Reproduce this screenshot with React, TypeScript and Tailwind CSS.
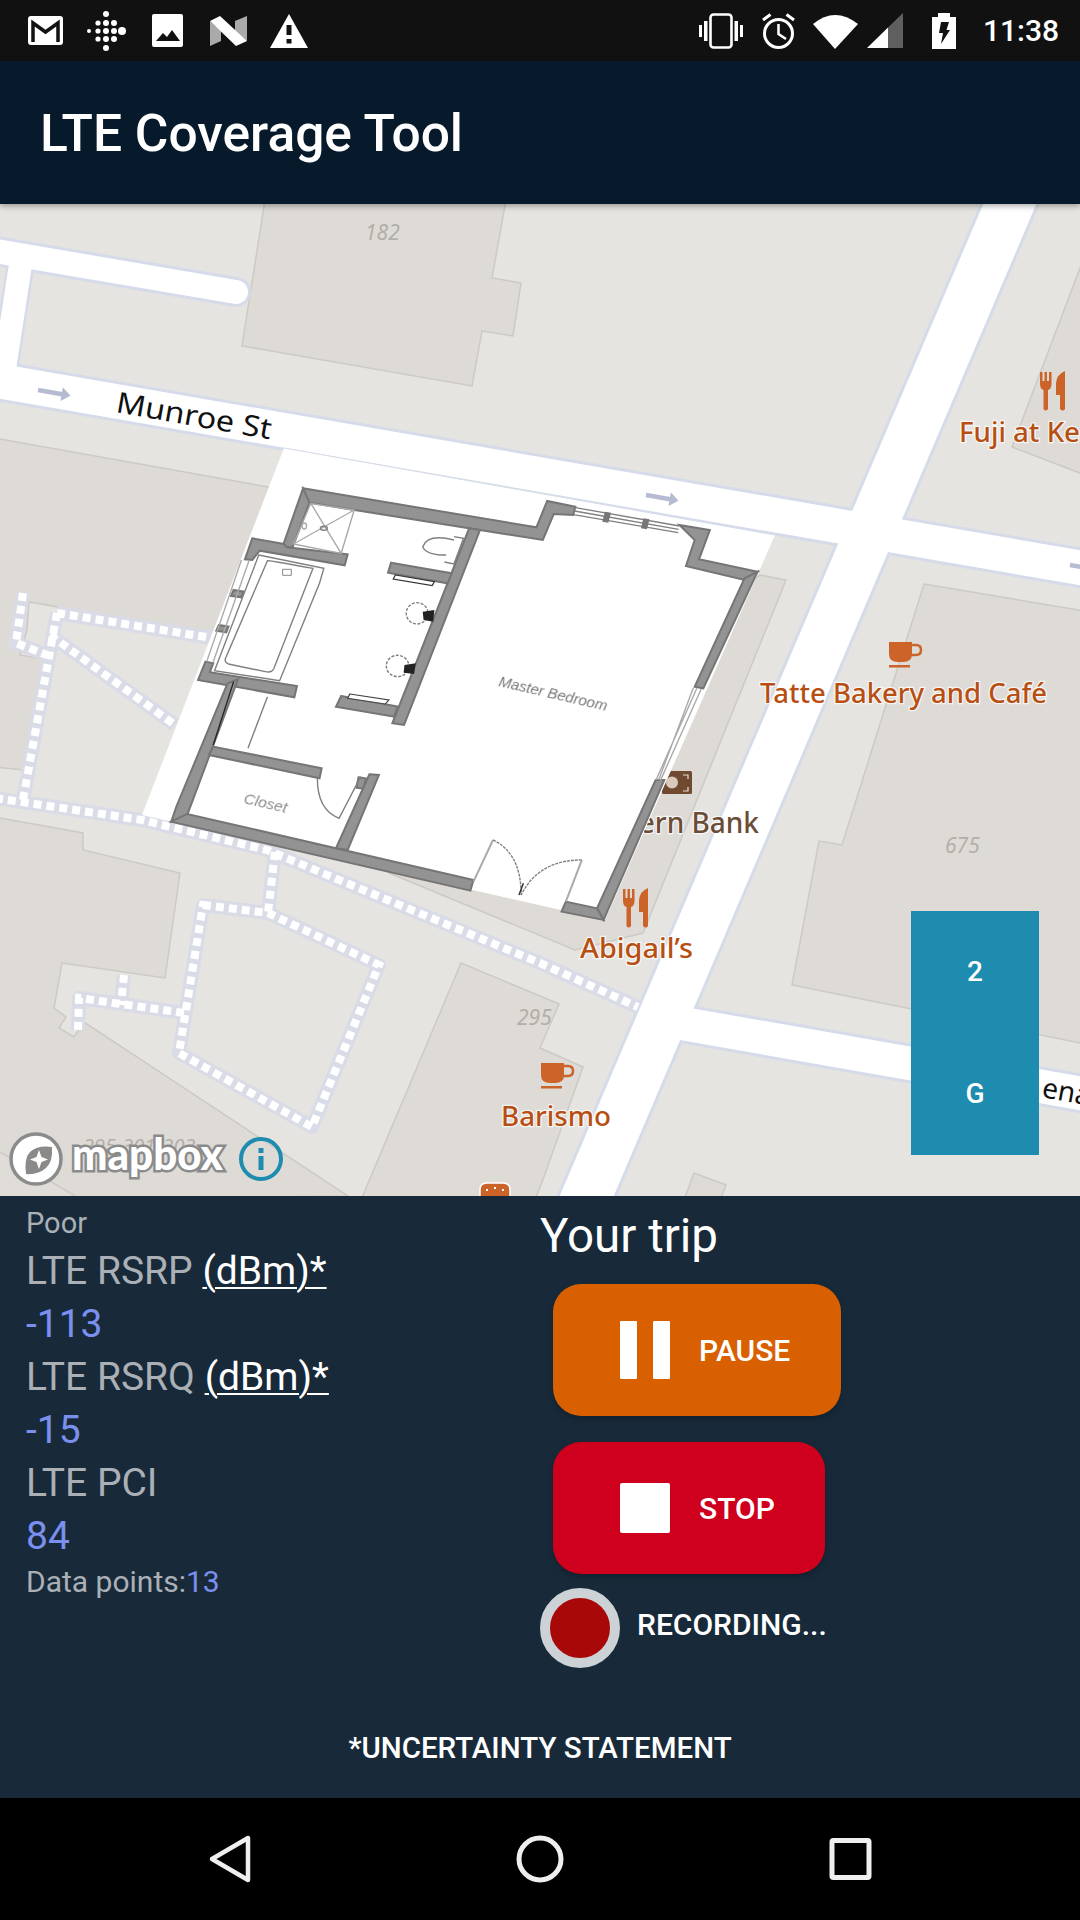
const FP = "translate(120 440) scale(0.4337 0.3333)";
const walls = [
  "422,145 960,262 985,183 1050,200 1045,225 1000,222 975,300 435,188",
  "422,145 437,188 398,322 375,320",
  "305,295 378,312 385,322 525,343 518,376 322,332 305,360 288,358",
  "197,665 215,670 207,697 408,738 402,772 180,720",
  "248,730 272,718 155,1125 118,1145 130,1100",
  "215,920 465,985 460,1015 205,945",
  "118,1145 155,1122 815,1320 808,1352",
  "575,1003 597,1005 525,1230 498,1225",
  "550,1012 568,1016 560,1046 545,1043",
  "805,265 830,270 655,855 628,850",
  "625,368 765,400 755,430 618,398",
  "510,768 640,800 632,830 498,800",
  "1290,255 1360,270 1335,358 1470,395 1440,420 1305,378 1325,300",
  "1440,415 1470,395 1345,745 1325,740",
  "1235,1020 1255,1020 1115,1440 1100,1405",
  "1028,1385 1100,1405 1115,1440 1018,1415",
  "262,450 285,455 280,472 256,468",
  "228,555 250,560 245,577 222,572",
];

function FloorPlan() {
  const thin = { fill: "none", stroke: "#808080", strokeWidth: 1.4, vectorEffect: "non-scaling-stroke" as const };
  const light = { fill: "none", stroke: "#aaaaaa", strokeWidth: 1.4, vectorEffect: "non-scaling-stroke" as const };
  return (
    <g>
      <polygon points="284,448 775,535 605,920 142,815" fill="#ffffff" />
      <line x1="284" y1="448" x2="775" y2="535" stroke="#d5dbe9" strokeWidth="1" />
      <g transform={FP} filter="url(#soft)">
        {walls.map((p) => (
          <polygon key={p} points={p} fill="#939393" stroke="#757575" strokeWidth="2" vectorEffect="non-scaling-stroke" />
        ))}
        <path d="M1050 203 L1290 258 M1046 224 L1287 278 M1048 213 L1288 268" {...thin} />
        <polygon points="1118,215 1132,218 1126,248 1112,245" fill="#777" />
        <polygon points="1207,235 1221,238 1215,268 1201,265" fill="#777" />
        <path d="M1330 745 L1236 1020 M1340 747 L1246 1022 M1322 743 L1242 1020" {...light} />
        <path d="M298 360 L215 665 M280 360 L200 665" {...light} />
        <path d="M455 1015 Q455 1110 505 1135 L555 1010" {...thin} />
        <path d="M815 1325 L860 1200" {...light} strokeWidth="2" />
        <path d="M860 1200 Q925 1240 925 1365" {...thin} strokeDasharray="3 1" />
        <path d="M1065 1260 Q965 1260 925 1365" {...thin} strokeDasharray="3 1" />
        <path d="M1065 1260 L1028 1385" {...light} strokeWidth="2" />
        <path d="M920 1365 L930 1330" stroke="#333" strokeWidth="1.5" vectorEffect="non-scaling-stroke" fill="none" />
        <path d="M262 725 L215 915" stroke="#222" strokeWidth="1.3" vectorEffect="non-scaling-stroke" fill="none" />
        <path d="M340 770 L295 925" {...thin} />
        <path d="M320 345 L470 385 L460 430 L368 722 L218 692 Z" {...thin} />
        <path d="M340 362 Q338 360 445 385 L355 685 Q350 700 335 695 L250 672 Q238 665 245 650 Z" {...thin} />
        <rect x="375" y="388" width="20" height="18" fill="none" stroke="#888" strokeWidth="1" vectorEffect="non-scaling-stroke" />
        <path d="M440 190 L540 210 L510 340 L400 312 Z M440 190 L510 340 M540 210 L400 312" {...light} />
        <ellipse cx="470" cy="265" rx="8" ry="6" {...thin} />
        <ellipse cx="425" cy="258" rx="5" ry="9" {...light} />
        <path d="M770 290 L792 295 L770 372 L748 366" {...thin} />
        <path d="M770 300 Q710 280 698 320 Q705 345 752 345" {...thin} />
        <ellipse cx="685" cy="520" rx="25" ry="32" {...thin} strokeDasharray="3 1.5" />
        <polygon points="698,515 725,510 722,545 700,540" fill="#222" />
        <ellipse cx="640" cy="678" rx="26" ry="32" {...thin} strokeDasharray="3 1.5" />
        <polygon points="656,675 682,670 678,702 654,698" fill="#222" />
        <polygon points="635,405 725,425 720,437 630,417" fill="#fff" stroke="#333" strokeWidth="1.2" vectorEffect="non-scaling-stroke" />
        <polygon points="530,762 620,780 612,792 525,775" fill="#fff" stroke="#444" strokeWidth="1.2" vectorEffect="non-scaling-stroke" />
      </g>
      <text x="498" y="686" fontFamily="Liberation Sans, sans-serif" fontStyle="italic" fontSize="15" fill="#777" transform="rotate(13 498 686)" filter="url(#soft)">Master Bedroom</text>
      <text x="243" y="803" fontFamily="Liberation Sans, sans-serif" fontStyle="italic" fontSize="15.500" fill="#8a8a8a" transform="rotate(13 243 803)" filter="url(#soft)">Closet</text>
    </g>
  );
}

function Cup({ x, y }: { x: number; y: number }) {
  return (
    <g transform={`translate(${x} ${y})`} fill="#cc6429" stroke="#fff" strokeWidth="0" >
      <path d="M0 0 H23 V12 Q23 20 14 20 H9 Q0 20 0 12 Z" />
      <path d="M23 3 H27 Q32 3 32 8 Q32 13 27 13 H22" fill="none" stroke="#cc6429" strokeWidth="2.5" />
      <rect x="0" y="23" width="21" height="2.5" />
    </g>
  );
}

function Utensils({ x, y }: { x: number; y: number }) {
  return (
    <g transform={`translate(${x} ${y})`} fill="#cc6429">
      <path d="M0 1 H2.5 V10 H4.5 V1 H7 V10 H9 V1 H11.5 V13 Q11.5 18 8 19 V38 Q5.7 41 3.5 38 V19 Q0 18 0 13 Z" />
      <path d="M25 0 V38 Q23 41 20 38 V24 H16 V12 Q17 3 25 0 Z" />
    </g>
  );
}

function Place({ x, y, children, anchor, fill = "#b84f12", size = 27, len }: { x: number; y: number; children: string; anchor?: "end"; fill?: string; size?: number; len?: number }) {
  return (
    <text x={x} y={y} textAnchor={anchor} fontFamily="Noto Sans, sans-serif" fontWeight="500" fontSize={size} fill={fill} stroke="#fff" strokeOpacity="0.75" strokeWidth="2.5" paintOrder="stroke" textLength={len} lengthAdjust="spacingAndGlyphs">
      {children}
    </text>
  );
}

function Num({ x, y, children, size = 21 }: { x: number; y: number; children: string; size?: number }) {
  return (
    <text x={x} y={y} fontFamily="Noto Sans, sans-serif" fontStyle="italic" fontSize={size} fill="#b2afa9">
      {children}
    </text>
  );
}

function Arrow({ x, y }: { x: number; y: number }) {
  return (
    <g transform={`translate(${x} ${y}) rotate(10)`} fill="none" stroke="#b5bcd1">
      <path d="M0 0 H26" strokeWidth="4.5" />
      <path d="M24 -7 L33 0 L24 7" fill="#b5bcd1" strokeWidth="0" />
    </g>
  );
}

function MapView() {
  const buildings = [
    "265,200 506,200 492,278 521,283 513,336 482,331 472,386 242,346",
    "-5,438 268,487 290,500 225,636 29,602 27,630 20,655 43,659 23,770 -5,767",
    "-5,817 83,833 83,850 180,873 165,978 62,963 54,1008 66,1017 59,1028 74,1037 84,1022 348,1196 -5,1200",
    "461,963 559,1004 540,1048 583,1067 545,1174 535,1200 361,1200",
    "760,575 786,580 643,933 575,950 389,873 600,700",
    "924,584 1090,612 1090,1045 792,985 819,841 842,845",
    "1085,255 1012,447 1085,475",
    "694,1173 726,1185 720,1200 684,1200",
  ];
  const dashPath =
    "M23 593 L16 643 L47 655 M57 613 L23 800 M57 613 L212 638 M50 635 L175 725 M-5 798 L142 820 L267 850 L344 882 L540 963 L638 1007 M275 852 L268 913 M203 905 L268 913 L379 965 L312 1127 L179 1053 Z M184 1013 L79 998 L78 1030 M124 975 L121 1005";
  return (
    <div className="relative h-[992px] w-full overflow-hidden">
      <svg viewBox="0 204 1080 992" className="block h-full w-full">
        <defs>
          <filter id="soft" x="-5%" y="-5%" width="110%" height="110%">
            <feGaussianBlur stdDeviation="0.6" />
          </filter>
        </defs>
        <rect x="0" y="204" width="1080" height="992" fill="#e5e4e0" />
        {buildings.map((p) => (
          <polygon key={p} points={p} fill="#dedbd7" stroke="#cdcac4" strokeWidth="1.5" />
        ))}
        <polygon points="0,1152 75,1196 0,1196" fill="#e0ddd9" />
        <line x1="0" y1="1152" x2="75" y2="1196" stroke="#cdcac4" strokeWidth="1.5" />

        <g fill="none" stroke="#d5dbe9" strokeLinecap="round">
          <path d="M-10 250 L236 292" strokeWidth="30" />
          <path d="M22 255 L4 372" strokeWidth="28" strokeLinecap="butt" />
        </g>
        <g fill="#d5dbe9" stroke="#d5dbe9" strokeWidth="6" strokeLinejoin="miter">
          <polygon points="-10,362 1090,552 1090,587 -10,397" />
          <polygon points="985,200 1038,200 612,1200 558,1200" />
          <polygon points="690,1008 1090,1078 1090,1112 680,1040" />
        </g>
        <g fill="none" stroke="#fff" strokeLinecap="round">
          <path d="M-10 250 L236 292" strokeWidth="24" />
          <path d="M22 255 L4 372" strokeWidth="23" strokeLinecap="butt" />
        </g>
        <g fill="#fff">
          <polygon points="-10,362 1090,552 1090,587 -10,397" />
          <polygon points="985,200 1038,200 612,1200 558,1200" />
          <polygon points="690,1008 1090,1078 1090,1112 680,1040" />
        </g>

        <path d={dashPath} fill="none" stroke="#d9dbe7" strokeWidth="14" strokeLinejoin="round" />
        <path d={dashPath} fill="none" stroke="#fff" strokeWidth="8" strokeDasharray="8 5" />

        <Arrow x={38} y={390} />
        <Arrow x={646} y={495} />
        <Arrow x={1070} y={565} />

        <text x="115" y="412" fontFamily="Noto Sans, sans-serif" fontSize="29" fill="#111" transform="rotate(10 115 412)" textLength="157" lengthAdjust="spacingAndGlyphs">Munroe St</text>
        <text x="1041" y="1097" fontFamily="Noto Sans, sans-serif" fontSize="28" fill="#111" transform="rotate(10 1041 1097)">ena</text>

        <Num x={365} y={240}>182</Num>
        <Num x={945} y={853}>675</Num>
        <Num x={517} y={1025}>295</Num>
        <Num x={83} y={1153} size={20}>295-301/303</Num>

        <Utensils x={1040} y={371} />
        <Place x={959} y={442} len={121}>Fuji at Ke</Place>
        <Cup x={889} y={642} />
        <Place x={760} y={703} len={287}>Tatte Bakery and Café</Place>
        <g transform="translate(662 771)">
          <rect width="30" height="23" rx="1.5" fill="#6f4a30" />
          <circle cx="10" cy="11.5" r="6" fill="#d9c9bc" />
          <path d="M21 4 H26 V8 M26 16 V20 H21" fill="none" stroke="#e8dcd2" strokeWidth="1.2" />
        </g>
        <Place x={759} y={833} anchor="end" fill="#6b4c36" size={28}>Eastern Bank</Place>
        <Utensils x={623} y={888} />
        <Place x={580} y={958} len={113}>Abigail’s</Place>
        <Cup x={541} y={1063} />
        <Place x={501} y={1126} len={110}>Barismo</Place>
        <g transform="translate(480 1183)">
          <path d="M0 14 V7 Q0 0 7 0 H23 Q30 0 30 7 V14 Z" fill="#cc6429" stroke="#fff" strokeWidth="1.5" />
          <path d="M6 7 H8 M14 5 H16 M22 7 H24" stroke="#fff" strokeWidth="2" />
        </g>

        <FloorPlan />

        <g>
          <circle cx="36" cy="1159" r="25" fill="#fff" stroke="#8b8b8b" strokeWidth="3.5" />
          <path d="M26 1174 Q24 1158 30 1152 Q38 1145 52 1147 Q53 1162 46 1168 Q38 1175 26 1174 Z" fill="#8c8a88" />
          <path d="M39 1150 L41.5 1157 L48 1159.5 L41.5 1162 L39 1169 L36.5 1162 L30 1159.5 L36.500 1157 Z" fill="#fff" />
          <text x="72" y="1170" fontFamily="Lato, sans-serif" fontWeight="900" fontSize="43" fill="#fff" stroke="#8b8b8b" strokeWidth="5" paintOrder="stroke" textLength="151" lengthAdjust="spacingAndGlyphs">mapbox</text>
          <circle cx="261" cy="1159" r="20" fill="none" stroke="#1e8cae" strokeWidth="4" />
          <rect x="258.500" y="1156" width="5" height="14" fill="#1e8cae" />
          <rect x="258.500" y="1148" width="5" height="5" fill="#1e8cae" />
        </g>
      </svg>
      <div className="absolute left-[911px] top-[707px] flex h-[244px] w-[128px] flex-col bg-[#1e8cae] text-[28px] font-medium text-white">
        <div className="flex flex-1 items-center justify-center">2</div>
        <div className="flex flex-1 items-center justify-center">G</div>
      </div>
    </div>
  );
}

function StatusBar() {
  const dots: [number, number, number][] = [
    [2, 20, 2], [11, 12, 2.6], [11, 20, 2.6], [11, 28, 2.6],
    [19, 3, 3], [19, 12, 3], [19, 20, 3], [19, 28, 3], [19, 37, 3],
    [27, 12, 3], [27, 20, 3], [27, 28, 3], [35, 20, 4],
  ];
  return (
    <div className="flex h-[61px] shrink-0 items-center bg-[#111111] pl-[28px] pr-[21px] text-white">
      <svg width="35" height="29" viewBox="0 0 35 29" className="mr-[24px]">
        <rect width="35" height="29" rx="3" fill="#fff" />
        <polyline points="5,26 5,7 17.5,16 30,7 30,26" fill="none" stroke="#111" strokeWidth="3.5" />
      </svg>
      <svg width="40" height="40" viewBox="0 0 40 40" className="mr-[25px]">
        {dots.map(([cx, cy, r]) => <circle key={`${cx}-${cy}`} cx={cx} cy={cy} r={r} fill="#fff" />)}
      </svg>
      <svg width="31" height="33" viewBox="0 0 31 33" className="mr-[27px]">
        <rect width="31" height="33" rx="2" fill="#fff" />
        <polygon points="4,27 11,19 15,23 20,16 28,27" fill="#111" />
      </svg>
      <svg width="37" height="30" viewBox="0 0 37 30" className="mr-[23px]">
        <polygon points="0,5 0,30 11,25 11,15" fill="#aaa" />
        <polygon points="25,5 37,0 37,25 25,15" fill="#aaa" />
        <polygon points="0,5 10,0 37,25 26,30" fill="#fff" />
      </svg>
      <svg width="38" height="34" viewBox="0 0 38 34">
        <polygon points="19,0 38,34 0,34" fill="#fff" />
        <rect x="16.500" y="11" width="5" height="10" fill="#111" />
        <rect x="16.500" y="25" width="5" height="4.500" fill="#111" />
      </svg>
      <div className="ml-auto flex items-center">
        <svg width="46" height="36" viewBox="0 0 46 36" className="mr-[17px]">
          <rect x="12.500" y="1.500" width="21" height="33" rx="3" fill="none" stroke="#fff" strokeWidth="2.6" />
          <rect x="1" y="12" width="3" height="12" fill="#fff" />
          <rect x="6" y="8" width="3.500" height="20" fill="#fff" />
          <rect x="36.500" y="8" width="3.500" height="20" fill="#fff" />
          <rect x="42" y="12" width="3" height="12" fill="#fff" />
        </svg>
        <svg width="35" height="36" viewBox="0 0 35 36" className="mr-[17px]">
          <circle cx="17.500" cy="20.500" r="14" fill="none" stroke="#fff" strokeWidth="3" />
          <path d="M17.500 11 V21 L25 26" fill="none" stroke="#fff" strokeWidth="2.500" />
          <path d="M2 7 L9.500 1.500 M33 7 L25.500 1.500" stroke="#fff" strokeWidth="3" />
        </svg>
        <svg width="45" height="36" viewBox="0 0 45 36" className="mr-[9px]">
          <path d="M22 36 L0 11 Q22 -7 45 11 Z" fill="#fff" />
        </svg>
        <svg width="36" height="35" viewBox="0 0 36 35" className="mr-[29px]">
          <polygon points="21,14.500 36,0 36,35 21,35" fill="#5f5f5f" />
          <polygon points="0,35 21,14.500 21,35" fill="#fff" />
        </svg>
        <svg width="24" height="36" viewBox="0 0 24 36" className="mr-[27px]">
          <path d="M6 0 H18 V4 H24 V36 H0 V4 H6 Z" fill="#fff" />
          <polygon points="9,9 17,9 14.500,17 18,17 9,31 11,20 7,20" fill="#111" />
        </svg>
        <span className="font-['Roboto'] text-[30px] font-medium leading-none">11:38</span>
      </div>
    </div>
  );
}

function Label({ children }: { children: string }) {
  return (
    <div className="h-[53px] text-[39px] leading-[53px] text-[#aab0b6]">
      {children} <span className="text-white underline decoration-2 underline-offset-[3px]">(dBm)*</span>
    </div>
  );
}

function Value({ children }: { children: string }) {
  return <div className="h-[53px] text-[39px] leading-[53px] text-[#7b90ee]">{children}</div>;
}

export default function App() {
  return (
    <div className="flex h-[1920px] w-[1080px] flex-col overflow-hidden bg-black font-['Roboto',sans-serif]">
      <StatusBar />
      <header className="relative z-10 flex h-[143px] shrink-0 items-center bg-[#071a2b] pl-[40px] pt-[2px] shadow-[0_2px_6px_rgba(0,0,0,0.35)]">
        <h1 className="text-[51.5px] font-medium leading-none text-white">LTE Coverage Tool</h1>
      </header>
      <MapView />
      <section className="flex h-[602px] shrink-0 flex-col bg-[#182a3a]">
        <div className="flex flex-1">
          <div className="w-[540px] pl-[26px] pt-[8px]">
            <div className="h-[38px] text-[29px] leading-[38px] text-[#aab0b6]">Poor</div>
            <div className="h-[3px]" />
            <Label>LTE RSRP</Label>
            <Value>-113</Value>
            <Label>LTE RSRQ</Label>
            <Value>-15</Value>
            <div className="h-[53px] text-[39px] leading-[53px] text-[#aab0b6]">LTE PCI</div>
            <Value>84</Value>
            <div className="text-[30px] leading-[38px] text-[#aab0b6]">Data points:<span className="text-[#7b90ee]">13</span></div>
          </div>
          <div className="flex flex-col items-start">
            <div className="mt-[13px] text-[47.5px] leading-[54px] text-white">Your trip</div>
            <button className="ml-[13px] mt-[21px] flex h-[132px] w-[288px] items-center rounded-[28px] bg-[#d86000] pl-[67px] shadow-[0_3px_6px_rgba(0,0,0,0.25)]">
              <span className="flex h-[58px] w-[50px] justify-between blur-[0.6px]">
                <span className="block h-full w-[17px] rounded-[1px] bg-white" />
                <span className="block h-full w-[17px] rounded-[1px] bg-white" />
              </span>
              <span className="ml-[29px] pt-[1px] text-[30px] font-medium text-white">PAUSE</span>
            </button>
            <button className="ml-[13px] mt-[26px] flex h-[132px] w-[272px] items-center rounded-[28px] bg-[#cf001d] pl-[67px] shadow-[0_3px_6px_rgba(0,0,0,0.25)]">
              <span className="block h-[50px] w-[50px] rounded-[2px] bg-white blur-[0.6px]" />
              <span className="ml-[29px] pt-[1px] text-[30px] font-medium text-white">STOP</span>
            </button>
            <div className="mt-[14px] flex items-center">
              <span className="block h-[80px] w-[80px] rounded-full border-[10px] border-[#ccd2d6] bg-[#a80808] blur-[0.6px]" />
              <span className="ml-[17px] pb-[7px] text-[30px] font-medium text-white">RECORDING...</span>
            </div>
          </div>
        </div>
        <div className="pb-[32px] text-center text-[29.5px] font-medium leading-[36px] text-white">*UNCERTAINTY STATEMENT</div>
      </section>
      <nav className="relative flex h-[122px] shrink-0 items-center bg-black">
        <svg width="1080" height="122" viewBox="0 1798 1080 122" className="block">
          <path d="M248 1838 V1880 L212 1859 Z" fill="none" stroke="#efefef" strokeWidth="4.500" strokeLinejoin="round" />
          <circle cx="540" cy="1859" r="21" fill="none" stroke="#efefef" strokeWidth="5" />
          <rect x="832" y="1840.500" width="37" height="37" rx="1.500" fill="none" stroke="#efefef" strokeWidth="5" />
        </svg>
      </nav>
    </div>
  );
}
